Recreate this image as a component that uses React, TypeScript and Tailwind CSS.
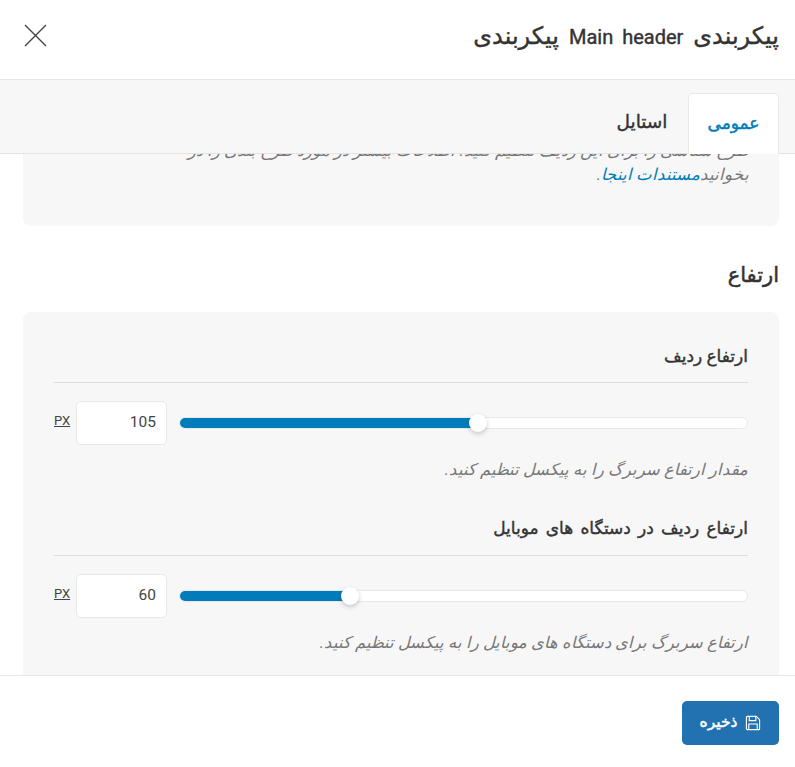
import React from "react";

const font = { fontFamily: 'Roboto, "Noto Sans", "DejaVu Sans", sans-serif' };

function SliderRow({ value, pct, help }: { value: string; pct: number; help: string }) {
  return (
    <>
      <div dir="ltr" className="flex items-center mt-[18px] h-[44px]">
        <span className="text-[13px] text-[#444] underline w-[22px] -mt-1">PX</span>
        <div className="w-[91px] h-[44px] bg-white border border-[#e8e8e8] rounded-[5px] flex items-center justify-end pr-[10px] text-[15.5px] text-[#444]">
          {value}
        </div>
        <div className="relative ml-[12px] flex-1 h-[12px] bg-white border border-[#e8e8e8] rounded-full">
          <div className="h-[10px] bg-[#007cba] rounded-full" style={{ width: `${pct}%` }} />
          <div
            className="absolute top-1/2 w-[18px] h-[18px] -mt-[9px] -ml-[9px] bg-white rounded-full shadow-[0_2px_5px_rgba(0,0,0,0.2)]"
            style={{ left: `${pct}%` }}
          />
        </div>
      </div>
      <p className="mt-[13px] text-[16.3px] leading-[24px] italic text-[#777] text-right" dir="rtl">
        {help}
      </p>
    </>
  );
}

export default function App() {
  return (
    <div dir="rtl" style={font} className="w-[795px] h-[767px] flex flex-col bg-white overflow-hidden">
      <header className="h-[80px] shrink-0 border-b border-[#e8e8e8] flex items-center justify-between pr-[16px] pl-[23px]">
        <h1 className="text-[24px] [word-spacing:4px] font-normal [-webkit-text-stroke:0.4px_#333] text-[#333] -mt-[8px]">
          پیکربندی <span className="text-[20px]">Main header</span> پیکربندی
        </h1>
        <svg width="25" height="25" viewBox="0 0 25 25" className="-mt-[8px]" fill="none" stroke="#444" strokeWidth="1.4">
          <path d="M2 2 L23 23 M23 2 L2 23" />
        </svg>
      </header>

      <nav className="h-[74px] shrink-0 bg-[#f7f7f7] border-b border-[#e3e3e3] flex items-end pr-[16px]">
        <div className="relative -mb-px h-[61px] w-[91px] bg-white border border-b-0 border-[#e8e8e8] rounded-t-[5px] flex items-center justify-center text-[17px] font-normal [-webkit-text-stroke:0.5px_#007cba] text-[#007cba]">
          عمومی
        </div>
        <div className="h-[60px] w-[92px] flex items-center justify-center text-[18.5px] font-normal [-webkit-text-stroke:0.4px_#333] text-[#333]">
          استایل
        </div>
      </nav>

      <main className="flex-1 overflow-hidden min-h-0">
        <div className="-mt-[19px] px-[16px] pl-[23px]">
          <section className="h-[91px] bg-[#f7f7f7] rounded-[8px] pt-[4px] pr-[30px] pl-[30px] text-[16.5px] leading-[24px] italic text-[#777]">
            <p className="h-[24px] overflow-hidden whitespace-nowrap">طرح شناسی را برای این ردیف تنظیم کنید. اطلاعات بیشتر در مورد طرح بندی را در</p>
            <p>
              بخوانید<span className="text-[#007cba]">مستندات اینجا</span>.
            </p>
          </section>

          <h2 className="mt-[33px] text-[21px] leading-[32px] font-normal [-webkit-text-stroke:0.5px_#333] text-[#333]">ارتفاع</h2>

          <section className="mt-[21px] bg-[#f7f7f7] rounded-[8px] px-[31px] pt-[31px] pb-[40px]">
            <h3 className="text-[17px] leading-[26px] font-normal [-webkit-text-stroke:0.4px_#333] text-[#333] pb-[13px] border-b border-[#ddd]">ارتفاع ردیف</h3>
            <SliderRow value="105" pct={52.6} help="مقدار ارتفاع سربرگ را به پیکسل تنظیم کنید." />
            <h3 className="mt-[33px] text-[17px] leading-[26px] [word-spacing:3px] font-normal [-webkit-text-stroke:0.4px_#333] text-[#333] pb-[14px] border-b border-[#ddd]">ارتفاع ردیف در دستگاه های موبایل</h3>
            <SliderRow value="60" pct={30} help="ارتفاع سربرگ برای دستگاه های موبایل را به پیکسل تنظیم کنید." />
          </section>
        </div>
      </main>

      <footer className="h-[92px] shrink-0 border-t border-[#e8e8e8] bg-white flex items-center pr-[16px] pt-[2px]">
        <button className="w-[97px] h-[44px] bg-[#2271b1] rounded-[5px] text-white text-[15.5px] font-normal [-webkit-text-stroke:0.5px_#fff] flex items-center justify-center gap-[8px]">
          <svg width="16" height="16" viewBox="0 0 17 17" fill="none" stroke="#fff" strokeWidth="1.2">
            <path d="M1.5 2.5a1 1 0 0 1 1-1h9.5l3.5 3.5v9.5a1 1 0 0 1-1 1h-12a1 1 0 0 1-1-1z" />
            <path d="M4.5 1.5v4.5h7v-4.5M4 15.5v-6h9v6" />
          </svg>
          <span>ذخیره</span>
        </button>
      </footer>
    </div>
  );
}
